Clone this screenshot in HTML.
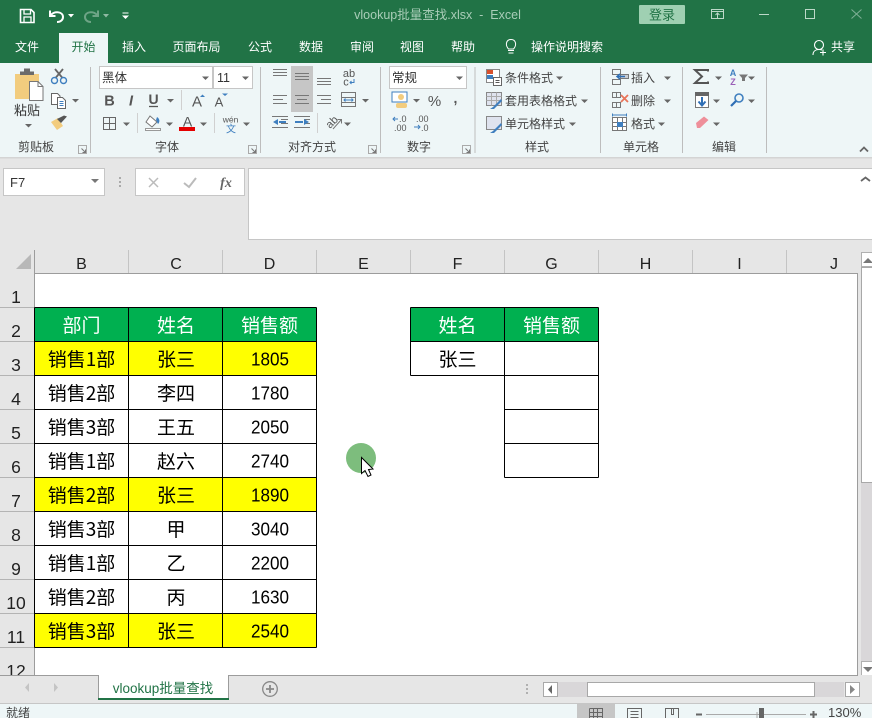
<!DOCTYPE html>
<html><head><meta charset="utf-8"><style>
html,body{margin:0;padding:0;width:872px;height:718px;overflow:hidden;background:#e6e6e6}
svg{display:block}
text{font-family:"Liberation Sans","Noto Sans CJK SC",sans-serif}
.r{font-size:12px;fill:#444}
.t{font-size:12px;fill:#fff;text-anchor:middle}
.g{font-size:12px;fill:#444;text-anchor:middle}
.c{font-size:19px;fill:#000;text-anchor:middle;font-family:"Noto Sans CJK SC",sans-serif}
.n{font-size:18px;fill:#000;text-anchor:middle}
.h{font-size:19px;fill:#fff;text-anchor:middle;font-family:"Noto Sans CJK SC",sans-serif}
.l{font-size:16px;fill:#222;text-anchor:middle}
.rn{font-size:17.5px;fill:#222;text-anchor:middle}
.i{fill:none;stroke:#666;stroke-width:1}
.cr{shape-rendering:crispEdges}
</style></head><body>
<svg width="872" height="718" viewBox="0 0 872 718" xmlns="http://www.w3.org/2000/svg">
<defs>
<path id="d" d="M-3.5 -1.5H3.5L0 2Z" fill="#666"/>
<g id="lc"><path d="M-4 -4H4V4H-4Z" fill="none" stroke="#aaa"/><path d="M-1 -1L3 3M3 0V3H0" stroke="#777" fill="none"/></g>
</defs>
<!-- backgrounds -->
<g class="cr">
<rect width="872" height="718" fill="#e6e6e6"/>
<rect width="872" height="63" fill="#217346"/>
<rect x="0" y="63" width="872" height="94" fill="#eef6f7"/>
<rect x="59" y="33" width="49" height="30" fill="#eef6f7"/>
<rect x="0" y="157" width="872" height="1.5" fill="#d4d4d4"/>
</g>
<!-- title bar -->
<g fill="none" stroke="#fff" stroke-width="1.6">
<path d="M20.500 9.500H31L34 12.500V22.500H20.500Z"/><path d="M24 9.500V14H30.500V9.500M24 22.500V17H31V22.500" stroke-width="1.300"/>
<path d="M50 10.500V16H55.500M50.500 15.500C54 10.500 63 11.500 63 17C63 20 60.500 22 57 22" stroke-width="2"/>
<g opacity=".35"><path d="M98 10.500V16H92.500M97.500 15.500C94 10.500 85 11.500 85 17C85 20 87.500 22 91 22" stroke-width="2"/></g>
</g>
<path d="M68 14H74L71 17.500Z" fill="#fff"/><path d="M103 14H109L106 17.500Z" fill="#8fb9a3"/>
<path d="M122.500 12.500H128.500V13.500H122.500ZM122 15.500H129L125.500 19Z" fill="#fff"/>
<text x="437.500" y="19" font-size="12.500" fill="#a9cdb8" text-anchor="middle">vlookup批量查找.xlsx&#160;&#160;-&#160;&#160;Excel</text>
<rect x="639" y="5" width="46" height="19" rx="1" fill="#9fd0b2"/>
<text x="662" y="19.500" font-size="13" fill="#217346" text-anchor="middle">登录</text>
<g fill="none" stroke="#bcd8c8" class="cr"><path d="M711.500 9.500H723.500V18.500H711.500ZM711.500 11.500H723.500"/><path d="M769 14.500H759"/><rect x="805.500" y="9.500" width="9" height="9"/></g>
<path d="M717.500 18V13.500M715.500 15L717.500 13L719.500 15" stroke="#bcd8c8" fill="none"/>
<path d="M851.500 9.500L861.500 18.500M861.500 9.500L851.500 18.500" stroke="#7fb096" fill="none"/>
<!-- tabs -->
<text class="t" x="27" y="51">文件</text>
<text class="t" x="83.500" y="51" style="fill:#217346">开始</text>
<text class="t" x="134" y="51">插入</text>
<text class="t" x="196.500" y="51">页面布局</text>
<text class="t" x="260" y="51">公式</text>
<text class="t" x="311" y="51">数据</text>
<text class="t" x="362" y="51">审阅</text>
<text class="t" x="412" y="51">视图</text>
<text class="t" x="463" y="51">帮助</text>
<path d="M508 50.500H514M508.500 53H513.500M508.500 49C505 45 506 39.500 511 39.500C516 39.500 517 45 513.500 49H508.500Z" fill="none" stroke="#fff"/>
<text class="t" x="567" y="51">操作说明搜索</text>
<circle cx="819" cy="45" r="4.500" fill="none" stroke="#fff" stroke-width="1.100"/><path d="M813 55C813 51 816 49.500 819 49.500C820 49.500 821 49.700 822 50M820 52.500H826M823 49.500V55.500" fill="none" stroke="#fff" stroke-width="1.100"/>
<text class="t" x="843" y="51">共享</text>
<!-- separators -->
<g fill="#bdbdbd" class="cr">
<rect x="90" y="67" width="1" height="86"/><rect x="260" y="67" width="1" height="86"/><rect x="380" y="67" width="1" height="86"/><rect x="474.500" y="67" width="1" height="86"/><rect x="600" y="67" width="1" height="86"/><rect x="682" y="67" width="1" height="86"/><rect x="766" y="67" width="1" height="86"/>
<rect x="181" y="90" width="1" height="20" fill="#d0d0d0"/><rect x="137" y="113" width="1" height="20" fill="#d0d0d0"/><rect x="214" y="113" width="1" height="20" fill="#d0d0d0"/><rect x="317" y="113" width="1" height="20" fill="#d0d0d0"/>
</g>
<!-- group labels -->
<g>
<text class="g" x="36" y="151">剪贴板</text><text class="g" x="167" y="151">字体</text><text class="g" x="312" y="151">对齐方式</text><text class="g" x="419" y="151">数字</text><text class="g" x="537" y="151">样式</text><text class="g" x="641" y="151">单元格</text><text class="g" x="724" y="151">编辑</text>
</g>
<use href="#lc" x="82.500" y="149.500"/><use href="#lc" x="252.500" y="149.500"/><use href="#lc" x="372.500" y="149.500"/><use href="#lc" x="466.500" y="149.500"/>
<path d="M860 151.500L864 147.500L868 151.500" fill="none" stroke="#666" stroke-width="1.800"/>
<!-- clipboard -->
<rect x="15" y="74" width="24" height="25" fill="#f2cc7e"/>
<path d="M20 71.500H34V75H20Z M24 68.500H30V72H24Z" fill="#6b6b6b"/>
<path d="M29.500 81.500H38L43 86.500V100.500H29.500Z" fill="#fff" stroke="#777"/><path d="M38 81.500V86.500H43" fill="none" stroke="#777"/>
<text x="27" y="115" font-size="13" fill="#333" text-anchor="middle">粘贴</text>
<use href="#d" x="28.500" y="125.500"/>
<!-- scissors -->
<path d="M55 69L62.500 78M63 69L55.500 78" stroke="#666" stroke-width="1.800" fill="none"/>
<circle cx="54.500" cy="80.500" r="3" fill="none" stroke="#3f7fbf" stroke-width="1.400"/><circle cx="63.500" cy="80.500" r="3" fill="none" stroke="#3f7fbf" stroke-width="1.400"/>
<!-- copy -->
<path d="M51.500 93.500H57.500L60 96V104.500H51.500Z" fill="#fff" stroke="#666"/>
<path d="M57.500 97.500H62.500L65.500 100.500V108.500H57.500Z" fill="#fff" stroke="#666"/>
<path d="M59.500 101.500H63.500M59.500 103.500H63.500M59.500 105.500H63.500" stroke="#3f7fbf"/>
<use href="#d" x="75.500" y="100.500"/>
<!-- brush -->
<path d="M51 122L58 118L63 126L57 130Z" fill="#f2cc7e"/>
<path d="M57 119L64 115.500L67 116.500L61 123Z" fill="#555"/>
<!-- font -->
<g class="cr"><rect x="99.500" y="66.500" width="113" height="22" fill="#fff" stroke="#c6c6c6"/><rect x="213.500" y="66.500" width="39" height="22" fill="#fff" stroke="#c6c6c6"/></g>
<text x="102" y="82" font-size="12.500" fill="#333">黑体</text><text x="217" y="82" font-size="12.500" fill="#333">11</text>
<use href="#d" x="205.500" y="78"/><use href="#d" x="245.500" y="78"/>
<text x="109.500" y="105.500" font-size="14.500" font-weight="bold" fill="#555" text-anchor="middle">B</text>
<text x="131" y="105.500" font-size="14.500" font-style="italic" font-weight="bold" fill="#555" text-anchor="middle">I</text>
<text x="153.500" y="104" font-size="14" font-weight="bold" fill="#555" text-anchor="middle">U</text><path d="M149 106.500H158" stroke="#555" stroke-width="1.300"/>
<use href="#d" x="170.500" y="100.500"/>
<text x="197" y="106.500" font-size="15" fill="#555" text-anchor="middle">A</text><path d="M200 97L202.500 94.500L205 97Z" fill="#3f7fbf"/>
<text x="219" y="106.500" font-size="13" fill="#555" text-anchor="middle">A</text><path d="M222 93.500H228L225 96Z" fill="#3f7fbf"/>
<g class="cr i"><rect x="103.500" y="117.500" width="12" height="12"/><path d="M109.500 117.500V129.500M103.500 123.500H115.500"/></g>
<use href="#d" x="126.500" y="124"/>
<path d="M150 116L157 122L152 127L146 122Z" fill="#fff" stroke="#777"/><path d="M157 117C160 119 160 122 158 124L156 120Z" fill="#3f7fbf"/><path d="M145.500 128.500H160.500V130.500H145.500Z" fill="#fff" stroke="#999"/>
<use href="#d" x="169.500" y="124"/>
<text x="187.500" y="126.500" font-size="14" fill="#555" text-anchor="middle">A</text><rect x="179" y="127" width="16" height="4" fill="#e50000" class="cr"/>
<use href="#d" x="203.500" y="124"/>
<text x="230.500" y="122.500" font-size="8.500" fill="#555" text-anchor="middle">wén</text><text x="231" y="132.500" font-size="10" fill="#3f7fbf" text-anchor="middle">文</text>
<use href="#d" x="246.500" y="124"/>
<!-- alignment -->
<rect x="291" y="66" width="22" height="46" fill="#c6c6c6" class="cr"/>
<g class="cr" stroke="#777" fill="none">
<path d="M273 69.500H287M273 72.500H287M273 75.500H287"/>
<path d="M295 73.500H309M295 76.500H309M295 79.500H309"/>
<path d="M317 78.500H331M317 81.500H331M317 84.500H331"/>
<path d="M273 95.500H287M273 99.500H283M273 103.500H287"/>
<path d="M295 95.500H309M297 99.500H307M295 103.500H309"/>
<path d="M317 95.500H331M321 99.500H331M317 103.500H331"/>
<path d="M281 119.500H288M281 123.500H288M272 127.500H288M272 116.500H288"/>
<path d="M304 119.500H310M304 123.500H310M294 127.500H310M294 116.500H310"/>
<rect x="341.500" y="92.500" width="14" height="14"/>
<path d="M341.500 97.500H355.500M341.500 102.500H355.500"/>
</g>
<path d="M344 100H353M345.500 98.500L344 100L345.500 101.500M351.500 98.500L353 100L351.500 101.500" stroke="#3f7fbf" fill="none"/>
<path d="M278 119L273 122L278 125ZM279 121H286V123H279Z" fill="#3f7fbf"/><path d="M304 119L309 122L304 125ZM295 121H303V123H295Z" fill="#3f7fbf"/>
<text x="349" y="77" font-size="11" fill="#555" text-anchor="middle">ab</text><text x="346" y="85.500" font-size="11" fill="#555" text-anchor="middle">c</text><path d="M354 79V82.500H350M351.500 81L350 82.500L351.500 84" stroke="#3f7fbf" fill="none"/>
<use href="#d" x="365.500" y="100.500"/>
<text x="0" y="0" font-size="11" fill="#555" transform="translate(330,129) rotate(-45)">ab</text>
<path d="M333 129L341 120M337.500 119.500H341.500V123.500" stroke="#777" fill="none"/>
<use href="#d" x="347.500" y="124"/>
<!-- number -->
<rect x="389.500" y="66.500" width="77" height="22" fill="#fff" stroke="#c6c6c6" class="cr"/>
<text x="392" y="82" font-size="12.500" fill="#333">常规</text><use href="#d" x="459.500" y="78"/>
<rect x="392" y="92" width="15" height="10" fill="#fff" stroke="#3f7fbf"/><circle cx="401" cy="97" r="3" fill="#f2cc7e"/><rect x="396" y="103" width="11" height="5" rx="2" fill="#f2cc7e"/>
<use href="#d" x="416.500" y="100.500"/>
<text x="434.500" y="106" font-size="15" fill="#555" text-anchor="middle">%</text>
<text x="455.500" y="103" font-size="14" font-weight="bold" fill="#555" text-anchor="middle">,</text>
<text x="399" y="122" font-size="9" fill="#555">.0</text><text x="394" y="131" font-size="9" fill="#555">.00</text><path d="M398 119H393M395 117L393 119L395 121" stroke="#3f7fbf" fill="none"/>
<text x="416" y="122" font-size="9" fill="#555">.00</text><text x="421" y="131" font-size="9" fill="#555">.0</text><path d="M414 127H420M418 125L420 127L418 129" stroke="#3f7fbf" fill="none"/>
<!-- styles -->
<g class="cr"><rect x="486.500" y="69.500" width="13" height="13" fill="#fff" stroke="#888"/><rect x="487" y="70" width="6" height="4" fill="#d8512e"/><rect x="487" y="75" width="6" height="4" fill="#3f7fbf"/><rect x="493.500" y="77.500" width="8" height="8" fill="#fff" stroke="#666"/><path d="M495.500 80.500H499.500M495.500 82.500H499.500" stroke="#555"/></g>
<g class="cr"><rect x="486.500" y="92.500" width="15" height="13" fill="#dfe3ee" stroke="#888"/><path d="M486.500 96.500H501.500M486.500 100.500H501.500M491.500 92.500V105.500M496.500 92.500V105.500" stroke="#aaa"/><rect x="486.500" y="116.500" width="15" height="13" fill="#dfe3ee" stroke="#888"/></g>
<path d="M501 99L493 107L490 109L494 109L502 101Z" fill="#3f7fbf"/><path d="M501 123L493 131L490 133L494 133L502 125Z" fill="#3f7fbf"/>
<text class="r" x="505" y="82">条件格式</text><use href="#d" x="559.500" y="78"/>
<text class="r" x="505" y="105">套用表格格式</text><use href="#d" x="584.500" y="101"/>
<text class="r" x="505" y="128">单元格样式</text><use href="#d" x="572.500" y="124"/>
<!-- cells -->
<g class="cr" fill="none" stroke="#777"><rect x="612.500" y="69.500" width="8" height="5"/><rect x="612.500" y="79.500" width="8" height="5"/><rect x="620.500" y="74.500" width="8" height="4" fill="#c9cdd3"/>
<rect x="612.500" y="92.500" width="8" height="5"/><rect x="612.500" y="102.500" width="8" height="5"/><path d="M616.500 92.500V97.500M616.500 102.500V107.500"/>
<rect x="612.500" y="117.500" width="14" height="13" fill="#fff"/><path d="M612.500 122.500H626.500M612.500 126.500H626.500M617.500 117.500V130.500M622.500 117.500V130.500"/></g>
<path d="M625 76.500H617M620 74L617 76.500L620 79" stroke="#2f6fb5" stroke-width="1.500" fill="none"/>
<path d="M621 95L628 102M628 95L621 102" stroke="#e8755a" stroke-width="1.800" fill="none"/>
<path d="M612.500 115H626.500M612.500 113.500V116.500M626.500 113.500V116.500" stroke="#3f7fbf" fill="none"/><rect x="617" y="122" width="6" height="5" fill="#3f7fbf"/>
<text class="r" x="631" y="82">插入</text><use href="#d" x="667.500" y="78"/>
<text class="r" x="631" y="105">删除</text><use href="#d" x="667.500" y="101"/>
<text class="r" x="631" y="128">格式</text><use href="#d" x="661.500" y="124"/>
<!-- editing -->
<path d="M708 71.500V70H695L702 76.500L695 83H708V81.500" fill="none" stroke="#555" stroke-width="2"/>
<use href="#d" x="718.500" y="78"/>
<text x="733" y="76" font-size="9" fill="#3f7fbf" font-weight="bold" text-anchor="middle">A</text><text x="733" y="85" font-size="9" fill="#9a5fb8" font-weight="bold" text-anchor="middle">Z</text>
<path d="M739 74.500H748L745 78V81H742V78Z" fill="#777"/><use href="#d" x="751.500" y="78"/>
<rect x="695.500" y="92.500" width="13" height="15" fill="#fff" stroke="#777" class="cr"/><rect x="695" y="92" width="14" height="4" fill="#666" class="cr"/>
<path d="M702 97V105M698.500 101.500L702 105.500L705.500 101.500" stroke="#2f6fb5" stroke-width="2" fill="none"/><use href="#d" x="716.500" y="101"/>
<circle cx="739" cy="98" r="4" fill="none" stroke="#3f7fbf" stroke-width="1.600"/><path d="M736 101L731 106" stroke="#2f6fb5" stroke-width="2.200"/><use href="#d" x="751.500" y="101"/>
<path d="M696 123L704 116.500L708.500 120L700 128H697Z" fill="#ee8f9a"/><use href="#d" x="716.500" y="124"/>
<!-- formula bar -->
<g class="cr"><rect x="3.500" y="168.500" width="101" height="27" fill="#fff" stroke="#c6c6c6"/><rect x="135.500" y="168.500" width="109" height="27" fill="#fff" stroke="#c6c6c6"/><rect x="248.500" y="168.500" width="630" height="71" fill="#fff" stroke="#c6c6c6"/></g>
<text x="10" y="187" font-size="13" fill="#333">F7</text>
<path d="M91 179H99L95 183Z" fill="#777"/>
<g fill="#aaa"><rect x="119" y="177" width="2" height="2"/><rect x="119" y="181" width="2" height="2"/><rect x="119" y="185" width="2" height="2"/></g>
<path d="M149 178L158 187M158 178L149 187" stroke="#bbb" stroke-width="1.500" fill="none"/>
<path d="M184 183L189 187L196 178" stroke="#bbb" stroke-width="2" fill="none"/>
<text x="226" y="187" font-size="14" font-style="italic" fill="#666" text-anchor="middle" font-weight="bold" style="font-family:'Liberation Serif',serif">fx</text>
<path d="M861 181L865.500 177.500L870 181" fill="none" stroke="#666" stroke-width="1.800"/>
<!-- col headers -->
<path d="M16 269L31 254V269Z" fill="#b8b8b8"/>
<g fill="#c4c4c4" class="cr"><rect x="34" y="250" width="1" height="23"/><rect x="128" y="250" width="1" height="23"/><rect x="222" y="250" width="1" height="23"/><rect x="316" y="250" width="1" height="23"/><rect x="410" y="250" width="1" height="23"/><rect x="504" y="250" width="1" height="23"/><rect x="598" y="250" width="1" height="23"/><rect x="692" y="250" width="1" height="23"/><rect x="786" y="250" width="1" height="23"/></g>
<text class="l" x="81.500" y="269">B</text><text class="l" x="176" y="269">C</text><text class="l" x="269.500" y="269">D</text><text class="l" x="363.500" y="269">E</text><text class="l" x="457.500" y="269">F</text><text class="l" x="551.500" y="269">G</text><text class="l" x="645.500" y="269">H</text><text class="l" x="739.500" y="269">I</text><text class="l" x="834" y="269">J</text>
<!-- sheet -->
<g class="cr">
<rect x="34" y="273" width="824" height="402" fill="#fff"/>
<rect x="34" y="273" width="824" height="1" fill="#9c9c9c"/>
<rect x="857" y="273" width="1" height="402" fill="#9c9c9c"/>
<rect x="34" y="250" width="1" height="425" fill="#9c9c9c"/>
<g fill="#b4b4b4"><rect x="0" y="307" width="34" height="1"/><rect x="0" y="341" width="34" height="1"/><rect x="0" y="375" width="34" height="1"/><rect x="0" y="409" width="34" height="1"/><rect x="0" y="443" width="34" height="1"/><rect x="0" y="477" width="34" height="1"/><rect x="0" y="511" width="34" height="1"/><rect x="0" y="545" width="34" height="1"/><rect x="0" y="579" width="34" height="1"/><rect x="0" y="613" width="34" height="1"/><rect x="0" y="647" width="34" height="1"/></g>
<!-- fills -->
<rect x="35" y="308" width="281" height="33" fill="#00b050"/>
<rect x="411" y="308" width="187" height="33" fill="#00b050"/>
<rect x="35" y="342" width="281" height="33" fill="#ffff00"/>
<rect x="35" y="478" width="281" height="33" fill="#ffff00"/>
<rect x="35" y="614" width="281" height="33" fill="#ffff00"/>
<!-- table lines -->
<path d="M34.500 307.500H316.500M34.500 341.500H316.500M34.500 375.500H316.500M34.500 409.500H316.500M34.500 443.500H316.500M34.500 477.500H316.500M34.500 511.500H316.500M34.500 545.500H316.500M34.500 579.500H316.500M34.500 613.500H316.500M34.500 647.500H316.500M34.500 307.500V647.500M128.500 307.500V647.500M222.500 307.500V647.500M316.500 307.500V647.500" stroke="#000" fill="none"/>
<path d="M410.500 307.500H598.500M410.500 341.500H598.500M410.500 375.500H598.500M504.500 409.500H598.500M504.500 443.500H598.500M504.500 477.500H598.500M410.500 307.500V375.500M504.500 307.500V477.500M598.500 307.500V477.500" stroke="#000" fill="none"/>
</g>
<!-- row numbers -->
<text class="rn" x="16" y="303">1</text><text class="rn" x="16" y="337">2</text><text class="rn" x="16" y="371">3</text><text class="rn" x="16" y="405">4</text><text class="rn" x="16" y="439">5</text><text class="rn" x="16" y="473">6</text><text class="rn" x="16" y="507">7</text><text class="rn" x="16" y="541">8</text><text class="rn" x="16" y="575">9</text><text class="rn" x="16" y="609">10</text><text class="rn" x="16" y="643">11</text><text class="rn" x="16" y="677">12</text>
<!-- table text -->
<text class="h" x="81.500" y="332">部门</text><text class="h" x="176" y="332">姓名</text><text class="h" x="269.500" y="332">销售额</text>
<text class="h" x="457.500" y="332">姓名</text><text class="h" x="551.500" y="332">销售额</text>
<text class="c" x="457.500" y="366">张三</text>
<g>
<text class="c" x="81.500" y="366">销售1部</text><text class="c" x="176" y="366">张三</text><text class="n" x="270" y="365.500" textLength="38" lengthAdjust="spacingAndGlyphs">1805</text>
<text class="c" x="81.500" y="400">销售2部</text><text class="c" x="176" y="400">李四</text><text class="n" x="270" y="399.500" textLength="38" lengthAdjust="spacingAndGlyphs">1780</text>
<text class="c" x="81.500" y="434">销售3部</text><text class="c" x="176" y="434">王五</text><text class="n" x="270" y="433.500" textLength="38" lengthAdjust="spacingAndGlyphs">2050</text>
<text class="c" x="81.500" y="468">销售1部</text><text class="c" x="176" y="468">赵六</text><text class="n" x="270" y="467.500" textLength="38" lengthAdjust="spacingAndGlyphs">2740</text>
<text class="c" x="81.500" y="502">销售2部</text><text class="c" x="176" y="502">张三</text><text class="n" x="270" y="501.500" textLength="38" lengthAdjust="spacingAndGlyphs">1890</text>
<text class="c" x="81.500" y="536">销售3部</text><text class="c" x="176" y="536">甲</text><text class="n" x="270" y="535.500" textLength="38" lengthAdjust="spacingAndGlyphs">3040</text>
<text class="c" x="81.500" y="570">销售1部</text><text class="c" x="176" y="570">乙</text><text class="n" x="270" y="569.500" textLength="38" lengthAdjust="spacingAndGlyphs">2200</text>
<text class="c" x="81.500" y="604">销售2部</text><text class="c" x="176" y="604">丙</text><text class="n" x="270" y="603.500" textLength="38" lengthAdjust="spacingAndGlyphs">1630</text>
<text class="c" x="81.500" y="638">销售3部</text><text class="c" x="176" y="638">张三</text><text class="n" x="270" y="637.500" textLength="38" lengthAdjust="spacingAndGlyphs">2540</text>
</g>
<!-- cursor -->
<circle cx="361" cy="458" r="15" fill="#7dbd7d"/>
<path d="M361.500 457.500V473.500L365 470.500L368 476.500L371 475L368.500 469.500L373 469Z" fill="#fff" stroke="#000"/>
<!-- vertical scrollbar -->
<g class="cr">
<rect x="858" y="240" width="14" height="436" fill="#e6e6e6"/>
<rect x="861" y="267" width="11" height="408" fill="#d9d7d9"/>
<rect x="861.500" y="267.500" width="11" height="215" fill="#fff" stroke="#a8a8a8"/>
<rect x="861.500" y="252.500" width="11" height="14" fill="#fff" stroke="#b0b0b0"/>
<rect x="861.500" y="661.500" width="11" height="14" fill="#fff" stroke="#b0b0b0"/>
</g>
<path d="M863 263L868 258L873 263Z" fill="#777"/><path d="M863 667H873L868 672Z" fill="#777"/>
<!-- tabs bar -->
<g class="cr">
<rect x="0" y="675" width="872" height="28" fill="#e6e6e6"/>
<rect x="0" y="675" width="858" height="1" fill="#9c9c9c"/>
<rect x="98" y="675" width="131" height="24" fill="#fff"/>
<rect x="98" y="675" width="1" height="24" fill="#9c9c9c"/><rect x="228" y="675" width="1" height="24" fill="#9c9c9c"/>
<rect x="98" y="698" width="131" height="2" fill="#217346"/>
<rect x="0" y="703" width="872" height="1" fill="#c6c6c6"/>
</g>
<path d="M25 687.500L29 683V692Z" fill="#c4c4c4"/><path d="M58 687.500L54 683V692Z" fill="#c4c4c4"/>
<text x="163" y="693" font-size="13.500" fill="#217346" text-anchor="middle">vlookup批量查找</text>
<circle cx="270" cy="689" r="7.300" fill="none" stroke="#888" stroke-width="1.300"/><path d="M270 685V693M266 689H274" stroke="#888" stroke-width="1.800"/>
<g fill="#b0b0b0" class="cr"><rect x="526" y="684" width="2" height="2"/><rect x="526" y="688" width="2" height="2"/><rect x="526" y="692" width="2" height="2"/></g>
<g class="cr"><rect x="558" y="682" width="286" height="15" fill="#d9d7d9"/><rect x="543.500" y="682.500" width="14" height="14" fill="#fff" stroke="#a8a8a8"/><rect x="845.500" y="682.500" width="14" height="14" fill="#fff" stroke="#a8a8a8"/><rect x="587.500" y="682.500" width="227" height="14" fill="#fff" stroke="#a8a8a8"/></g>
<path d="M552 685V694L548 689.500Z" fill="#666"/><path d="M850 685V694L855 689.500Z" fill="#888"/>
<!-- status bar -->
<rect x="0" y="704" width="872" height="14" fill="#eef6f7" class="cr"/>
<text x="6" y="717" font-size="12" fill="#444">就绪</text>
<rect x="577" y="704" width="38" height="14" fill="#c6c6c6" class="cr"/>
<g class="cr" fill="none" stroke="#666"><path d="M589.500 708.500H602.500V718M589.500 708.500V718M589.500 712.500H602.500M589.500 716.500H602.500M593.500 708.500V718M597.500 708.500V718"/><path d="M627.500 718V708.500H641.500V718M630.500 711.500H638.500M630.500 714.500H638.500M630.500 717.500H638.500"/><path d="M665.500 718V708.500H678.500V718M671.500 708.500V714.500H673.500V708.500"/>
<path d="M706 714.500H806" stroke="#aaa"/><path d="M757 712V718" stroke="#aaa"/></g>
<rect x="759" y="708" width="5" height="10" fill="#666" class="cr"/>
<rect x="696" y="713.500" width="6" height="2" fill="#666" class="cr"/><path d="M810 714.500H817M813.500 711V718" stroke="#666" stroke-width="2"/>
<text x="828" y="717" font-size="13" fill="#444">130%</text>
</svg>
</body></html>
